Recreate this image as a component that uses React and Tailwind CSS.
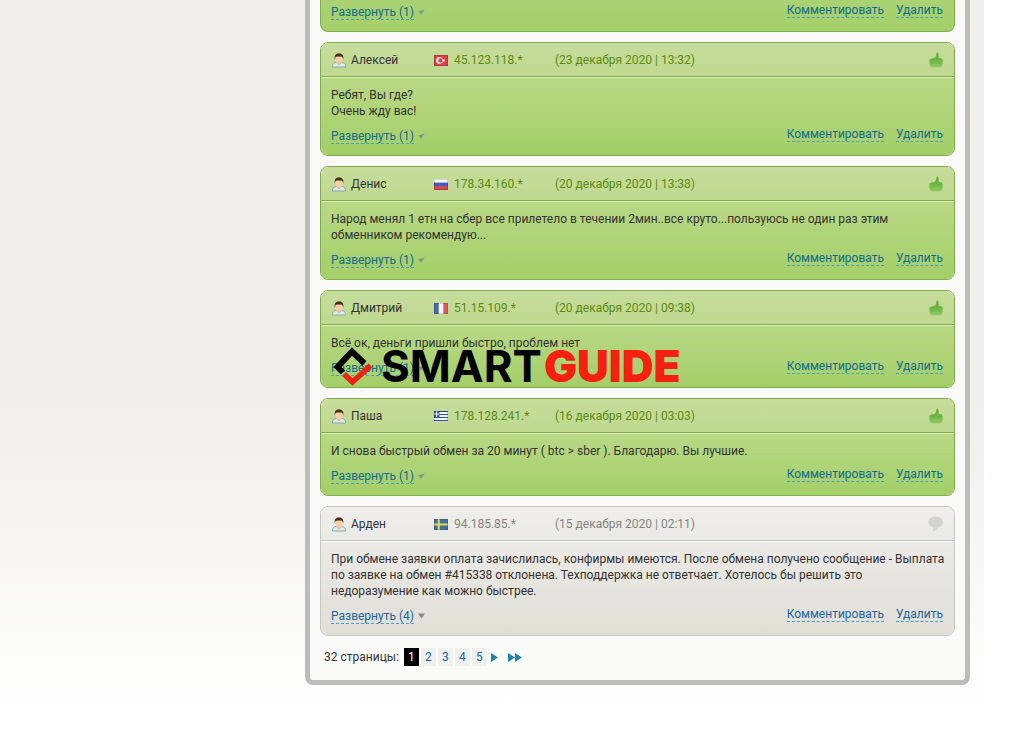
import React from "react";

const comments = [
  {
    name: "Алексей",
    flag: "tr",
    ip: "45.123.118.*",
    date: "(23 декабря 2020 | 13:32)",
    text: ["Ребят, Вы где?", "Очень жду вас!"],
    replies: 1,
    good: true,
  },
  {
    name: "Денис",
    flag: "ru",
    ip: "178.34.160.*",
    date: "(20 декабря 2020 | 13:38)",
    text: [
      "Народ менял 1 етн на сбер все прилетело в течении 2мин..все круто...пользуюсь не один раз этим",
      "обменником рекомендую...",
    ],
    replies: 1,
    good: true,
  },
  {
    name: "Дмитрий",
    flag: "fr",
    ip: "51.15.109.*",
    date: "(20 декабря 2020 | 09:38)",
    text: ["Всё ок, деньги пришли быстро, проблем нет"],
    replies: 1,
    good: true,
    watermark: true,
  },
  {
    name: "Паша",
    flag: "gr",
    ip: "178.128.241.*",
    date: "(16 декабря 2020 | 03:03)",
    text: ["И снова быстрый обмен за 20 минут ( btc > sber ). Благодарю. Вы лучшие."],
    replies: 1,
    good: true,
  },
  {
    name: "Арден",
    flag: "se",
    ip: "94.185.85.*",
    date: "(15 декабря 2020 | 02:11)",
    text: [
      "При обмене заявки оплата зачислилась, конфирмы имеются. После обмена получено сообщение - Выплата",
      "по заявке на обмен #415338 отклонена. Техподдержка не ответчает. Хотелось бы решить это",
      "недоразумение как можно быстрее.",
    ],
    replies: 4,
    good: false,
  },
];

const UserIcon = () => (
  <svg width="14" height="15" viewBox="0 0 14 15" className="shrink-0">
    <path d="M0.5 14V12.2Q1 9.8 4.5 9.2h5q3.500.6 4 3V14z" fill="#dceaec" stroke="#7fa5aa" strokeWidth="0.9" />
    <path d="M5 8.500h4v2L7 12.300 5 10.500z" fill="#e8b98c" />
    <ellipse cx="7" cy="5.800" rx="3.700" ry="4.300" fill="#f6cfa6" />
    <path d="M2.700 6.400Q1.800 .8 7 0.300 12.200 .8 11.300 6.400L10.300 3.700Q7 3.200 3.700 3.700z" fill="#4a3018" />
  </svg>
);

const Flag = ({ code }) => (
  <svg width="14" height="11" viewBox="0 0 14 11" className="shrink-0">
    {code === "tr" && (
      <>
        <rect width="14" height="11" fill="#d8434a" />
        <circle cx="5.500" cy="5.500" r="3.300" fill="#fff" />
        <circle cx="6.500" cy="5.500" r="2.300" fill="#d8434a" />
        <circle cx="9.500" cy="5.500" r="1.200" fill="#fff" />
      </>
    )}
    {code === "ru" && (
      <>
        <rect width="14" height="4" fill="#f6f6f6" />
        <rect y="3.600" width="14" height="4" fill="#4a55bd" />
        <rect y="7.300" width="14" height="3.700" fill="#d5454b" />
      </>
    )}
    {code === "fr" && (
      <>
        <rect width="14" height="11" fill="#f4f4f4" />
        <rect width="4.700" height="11" fill="#4a68ac" />
        <rect x="9.300" width="4.700" height="11" fill="#dd5a5c" />
      </>
    )}
    {code === "gr" && (
      <>
        <rect width="14" height="11" fill="#f1f5fa" />
        <path d="M0 .5h14M0 3.500h14M0 6.500h14M0 9.500h14" stroke="#2f5490" strokeWidth="1.200" />
        <rect width="5.500" height="6" fill="#2f5490" />
        <path d="M2.700 0v6M0 3h5.500" stroke="#f1f5fa" strokeWidth="1.100" />
      </>
    )}
    {code === "se" && (
      <>
        <rect width="14" height="11" fill="#3f74a0" />
        <path d="M4.800 0v11M0 5.500h14" stroke="#ecd651" strokeWidth="2" />
      </>
    )}
    <rect x="0.500" y="0.500" width="13" height="10" fill="none" stroke="#000" strokeOpacity="0.150" />
  </svg>
);

const ThumbIcon = () => (
  <svg width="14" height="16" viewBox="0 0 14 16">
    <defs>
      <linearGradient id="thumb" x1="0" y1="0" x2="0" y2="1">
        <stop offset="0" stopColor="#69a83b" />
        <stop offset="0.600" stopColor="#70b944" />
        <stop offset="1" stopColor="#96cb6b" />
      </linearGradient>
    </defs>
    <path
      d="M7.800 .5Q9.300 0 9.600 2.500L9.800 6 12 6.300Q13.800 6.800 13.700 8.500L13.500 13Q13.200 15.400 10.700 15.500L4 15.500Q1 15.400.6 13L.4 9Q.3 7 2.300 6.600L5.500 6Q7.300 4.800 7.400 2z"
      fill="url(#thumb)"
    />
  </svg>
);

const BubbleIcon = () => (
  <svg width="15" height="16" viewBox="0 0 15 16">
    <path
      d="M7.500.5C11.800.5 14.700 2.800 14.700 6S12.500 10.300 10.500 11.300C9.100 12 7.500 15.200 5.300 15.600 5.500 14 5.500 12.500 5.300 11.200 2.400 10.600.3 8.600.3 6 .3 2.800 3.200.5 7.500.5z"
      fill="#d3d3cf"
    />
  </svg>
);

const linkStyle =
  "block border-b border-dashed border-[#4d9fc0] leading-[14px] whitespace-nowrap";

const CardFooter = ({ replies, good }) => {
  const color = good ? "text-[#126c8a]" : "text-[#1f6596]";
  return (
    <div className={`flex items-start justify-between ${color}`}>
      <div className="flex items-center pt-[2px] h-[18px]">
        <a href="#" className={linkStyle}>
          Развернуть ({replies})
        </a>
        <svg width="7" height="6" viewBox="0 0 7 6" className="ml-1">
          {good ? (
            <path d="M0.300 2.300L3 5.800 6.800.3 3.200 1.800z" fill="#7d9384" />
          ) : (
            <path d="M0 .5h7L3.500 5.500z" fill="#858a8c" />
          )}
        </svg>
      </div>
      <div className="flex gap-3 pt-px pr-px">
        <a href="#" className={linkStyle}>
          Комментировать
        </a>
        <a href="#" className={linkStyle}>
          Удалить
        </a>
      </div>
    </div>
  );
};

const Watermark = () => (
  <div className="absolute left-[12px] top-[55px] flex items-center gap-[8px] pointer-events-none font-['Inter'] text-[44px] leading-[41px]">
    <svg width="40" height="41" viewBox="0 0 40 41">
      <path d="M10 26.500L4.500 21 19 5.500 31.500 17.500" fill="none" stroke="#000" strokeWidth="6" />
      <path d="M11 28L19.500 36 37.500 19.500" fill="none" stroke="#ee2314" strokeWidth="5.500" />
    </svg>
    <span className="flex gap-[2px]">
      <span className="font-bold text-black">SMART</span>
      <span className="font-black text-[#f5200f]">GUIDE</span>
    </span>
  </div>
);

const Comment = ({ item }) => {
  const { name, flag, ip, date, text, replies, good, watermark } = item;
  return (
    <article
      className={`relative rounded-[8px] border ${
        good ? "border-[#80ad4b]" : "border-[#c5c7c1]"
      }`}
    >
      <header
        className={`flex items-center h-[34px] px-[11px] pt-px rounded-t-[7px] border-b bg-linear-to-b ${
          good
            ? "border-[#80ad4b] from-[#c6dc9c] to-[#bfd98f] text-[#5c8a12]"
            : "border-[#c5c7c1] from-[#efeeeb] to-[#e9e9e5] text-[#85867f]"
        }`}
      >
        <div className="flex items-center gap-[5px] w-[102px] text-[#333]">
          <UserIcon />
          {name}
        </div>
        <div className="flex items-center gap-[6px] w-[121px]">
          <Flag code={flag} />
          {ip}
        </div>
        <time>{date}</time>
        <div className="ml-auto">{good ? <ThumbIcon /> : <BubbleIcon />}</div>
      </header>
      <div
        className={`border-t px-[10px] pt-[9px] pb-[11px] rounded-b-[7px] bg-linear-to-b ${
          good
            ? "border-[#e0f0c0] from-[#b9d885] to-[#a3cf68]"
            : "border-white from-[#ebeae6] to-[#dfded7]"
        }`}
      >
        <div className="mb-[7px] text-[#333] whitespace-nowrap">
          {text.map((line) => (
            <p key={line}>{line}</p>
          ))}
        </div>
        <CardFooter replies={replies} good={good} />
      </div>
      {watermark && <Watermark />}
    </article>
  );
};

const Pagination = () => (
  <nav className="flex items-center gap-[2px] mt-3 ml-1 h-[18px] text-[#1f6596]">
    <span className="text-[#333] mr-[3px]">32 страницы:</span>
    <span className="w-[15px] leading-[18px] text-center bg-black text-white">1</span>
    {[2, 3, 4, 5].map((page) => (
      <a key={page} href="#" className="w-[15px] leading-[18px] text-center bg-[#efefee]">
        {page}
      </a>
    ))}
    <a href="#" aria-label="Следующая" className="ml-[2px]">
      <svg width="7" height="9" viewBox="0 0 7 9">
        <path d="M0 0L7 4.500 0 9z" fill="#1b84ad" />
      </svg>
    </a>
    <a href="#" aria-label="Последняя" className="ml-[8px]">
      <svg width="14" height="9" viewBox="0 0 14 9">
        <path d="M0 0L7 4.500 0 9zM7 0L14 4.500 7 9z" fill="#1b84ad" />
      </svg>
    </a>
  </nav>
);

const App = () => {
  return (
    <div className="bg-white font-['Roboto',sans-serif] text-[12px] leading-4">
      <div className="flex items-start min-h-screen mr-[33px] pr-[14px] bg-linear-to-b from-[#f0efeb] from-55% to-white to-97%">
        <aside className="w-[305px] shrink-0" />
        <main className="flex-1 min-w-0 px-[10px] pb-[14px] border-[5px] border-t-0 border-[#bdbdb7] rounded-b-[8px] bg-[#fafaf8]">
          <div className="flex flex-col gap-[10px]">
            <article className="px-[10px] pt-[2px] pb-[11px] border border-t-0 border-[#80ad4b] rounded-b-[8px] bg-linear-to-b from-[#aad273] to-[#a3cf68]">
              <CardFooter replies={1} good />
            </article>
            {comments.map((item) => (
              <Comment key={item.name} item={item} />
            ))}
          </div>
          <Pagination />
        </main>
      </div>
    </div>
  );
};

export default App;
